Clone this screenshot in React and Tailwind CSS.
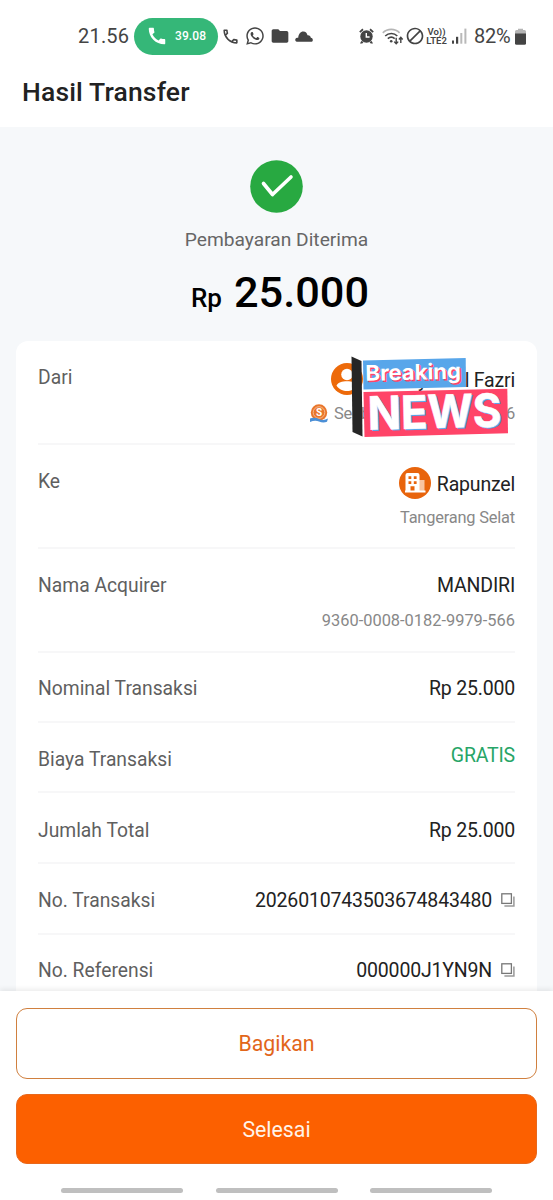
import { MdBlock, MdCall, MdFolder, MdOutlineCall } from 'react-icons/md';
import { FaWhatsapp } from 'react-icons/fa';

// ── Status bar icons ──────────────────────────────────────────────────────────
function CloudIcon() {
    return (
        <svg className="ml-[5px] w-[18px] h-[11px]" viewBox="0 0 18 11" fill="currentColor">
            <path d="M2 10.7C.5 10.4 0 9.300 .3 8.200C.8 7 2 6.700 3.200 6.800C3.500 3 5.500 .5 8.300 .5C10.700 .5 12 2 12.500 4.200C14.500 4 15.600 5 15.800 6.800C17.200 7 17.900 8 17.800 9.200C17.700 10.200 17 10.700 16 10.700Z" />
        </svg>
    );
}

function AlarmIcon() {
    return (
        <svg className="w-[15px] h-[16px]" viewBox="0 0 15 16" fill="currentColor">
            <path d="M.2 3.500 3.400.6 4.600 2 1.400 4.800ZM14.800 3.500 11.600.6 10.400 2 13.600 4.800Z" />
            <path d="M2.300 13 1 15.400H3.300L4.500 14ZM12.700 13 14 15.400H11.700L10.500 14Z" />
            <circle cx="7.500" cy="8.500" r="6.200" />
            <path d="M7.300 4.900V9H10.600" fill="none" stroke="#fff" strokeWidth="1.400" />
        </svg>
    );
}

function WifiIcon() {
    return (
        <svg className="ml-[8px] w-[22px] h-[17px]" viewBox="0 0 22 17" fill="none" stroke="currentColor" strokeWidth="1.600">
            <path d="M.8 4.900C5.500.2 13 .2 17.600 4.900" stroke="#b5b5b5" />
            <path d="M3.200 8C6.700 4.600 12 4.600 15.300 8" />
            <path d="M5.800 10.700C7.900 8.900 10.700 8.900 12.700 10.700" />
            <circle cx="9.200" cy="13.200" r="1.300" fill="currentColor" stroke="none" />
            <path d="M14.200 9.800V15.600M12.200 13.600 14.200 15.800 16.200 13.600M18.800 15V9.400M16.900 11.500 18.800 9.300 20.700 11.500" strokeWidth="1.400" />
        </svg>
    );
}

function SignalIcon() {
    return (
        <svg className="ml-[5px] w-[15px] h-[16px]" viewBox="0 0 15 16">
            <rect x="0" y="12.500" width="2" height="3.200" fill="#444" />
            <rect x="4" y="8.800" width="2.200" height="6.900" fill="#444" />
            <rect x="8.300" y="5" width="2" height="10.700" fill="#b9b9b9" />
            <rect x="12.400" y=".6" width="2" height="15.100" fill="#b9b9b9" />
        </svg>
    );
}

function BatteryIcon() {
    return (
        <svg className="ml-[3px] w-[11px] h-[17px]" viewBox="0 0 11 17">
            <path d="M3 2V.8H8V2H9.500Q11 2 11 3.500V6H0V3.500Q0 2 1.500 2Z" fill="#b5b5b5" />
            <path d="M0 5.500H11V15.200Q11 16.700 9.500 16.700H1.500Q0 16.700 0 15.200Z" fill="#444" />
        </svg>
    );
}

function StatusBar() {
    return (
        <div className="h-[72px] flex items-center pl-[78px] text-[#444]">
            <span className="w-[56px] text-[20px] tracking-[0.2px]">21.56</span>
            <div className="w-[84px] h-[37px] rounded-full bg-[#35b778] text-white flex items-center pl-[12px]">
                <MdCall className="w-[22px] h-[22px]" />
                <span className="ml-[7px] text-[12px] font-medium tracking-[0.1px]">39.08</span>
            </div>
            <MdOutlineCall className="ml-[3px] w-[19px] h-[19px]" />
            <FaWhatsapp className="ml-[5px] w-[20px] h-[20px]" />
            <MdFolder className="ml-[5px] w-[20px] h-[20px]" />
            <CloudIcon />
            <div className="ml-auto mr-[27px] flex items-center">
                <AlarmIcon />
                <WifiIcon />
                <MdBlock className="ml-[1px] w-[20px] h-[20px]" />
                <div className="ml-[1px] w-[21px] flex flex-col items-center text-[9.5px] leading-[9px] font-semibold">
                    <span>Vo))</span>
                    <span>LTE2</span>
                </div>
                <SignalIcon />
                <span className="ml-[7px] w-[38px] text-[20px] whitespace-nowrap tracking-[-0.3px]">82%</span>
                <BatteryIcon />
            </div>
        </div>
    );
}

// ── Card icons ────────────────────────────────────────────────────────────────
function CopyIcon() {
    return (
        <svg className="ml-[9px] w-[14px] h-[14px] -translate-y-px" viewBox="0 0 14 14" fill="none">
            <rect x=".8" y=".8" width="9.600" height="9.600" stroke="#777" strokeWidth="1.300" />
            <path d="M12.900 3.400V12.900H3.400" stroke="#999" strokeWidth="1.500" />
        </svg>
    );
}

function PersonAvatar() {
    return (
        <svg className="w-[32px] h-[32px]" viewBox="0 0 32 32">
            <circle cx="16" cy="16" r="16" fill="#ed6a0a" />
            <circle cx="16" cy="11.500" r="5.800" fill="#fff" />
            <path d="M5.500 22.500C7 19.500 11 18.300 16 18.300S25 19.500 26.500 22.500C24 26.500 20 28 16 28S8 26.500 5.500 22.500Z" fill="#fff" />
        </svg>
    );
}

function BuildingAvatar() {
    return (
        <svg className="w-[32px] h-[32px]" viewBox="0 0 32 32">
            <circle cx="16" cy="16" r="16" fill="#e8640c" />
            <path d="M20 13H25.500V24H20Z" fill="#f8c4a0" />
            <path d="M6.500 8Q6.500 6 8.500 6H18.500Q20.500 6 20.500 8V23.500H26.500V25.500H6V23.500H6.500Z" fill="#fff" />
            <path d="M9.500 9.300H12.300V12.100H9.500ZM14.800 9.300H17.600V12.100H14.800ZM9.500 14.300H12.300V17.100H9.500ZM14.800 14.300H17.600V17.100H14.800ZM11.500 19.300H15.500V23.500H11.500Z" fill="#e8640c" />
        </svg>
    );
}

function MedalIcon() {
    return (
        <svg className="w-[18px] h-[19px] -translate-y-px" viewBox="0 0 18 19">
            <circle cx="9" cy="8.500" r="8.200" fill="#e9762b" />
            <circle cx="9" cy="8.500" r="5.800" fill="none" stroke="#f7b98c" strokeWidth="1" />
            <text x="9" y="12" textAnchor="middle" fontSize="10" fontWeight="700" fill="#fff">S</text>
            <path d="M0 14.500Q4.500 12.800 9 15T18 14.500L17 17.800Q13 19.300 9 17.500T0 18Z" fill="#4b8fd6" />
        </svg>
    );
}

// "Breaking NEWS" sticker laid over the sender details
function NewsSticker() {
    return (
        <svg
            className="absolute left-[334px] top-[13px] w-[160px] h-[86px] overflow-visible"
            viewBox="350 354 160 86"
            fontFamily="Inter, sans-serif"
            fontWeight="700"
        >
            <path d="M351.500 356.500 361.500 361 362.500 436.500 352.500 432Z" fill="#262626" />
            <path d="M363 360.500 465.700 358 466 387 363.500 389.500Z" fill="#58a6ea" />
            <path d="M363.500 392 507.300 388.700 508 433.300 364.500 437Z" fill="#ff4468" />
            <g transform="rotate(-1.400 367 380)" fontSize="21.500">
                <text x="367" y="382.300" textLength="95.500" lengthAdjust="spacingAndGlyphs" fill="#ff4468">Breaking</text>
                <text x="365.500" y="380.800" textLength="95.500" lengthAdjust="spacingAndGlyphs" fill="#fff">Breaking</text>
            </g>
            <g transform="rotate(-1.400 369 430)" fontSize="46">
                <text x="369.500" y="431" textLength="133.500" lengthAdjust="spacingAndGlyphs" fill="#58a6ea">NEWS</text>
                <text x="368" y="429.700" textLength="133.500" lengthAdjust="spacingAndGlyphs" fill="#fff" stroke="#fff" strokeWidth=".5">NEWS</text>
            </g>
        </svg>
    );
}

// ── Detail row ────────────────────────────────────────────────────────────────
function Row({ label, className = 'h-[70px] pt-[25px]', children }) {
    return (
        <div className={`flex justify-between border-b-2 border-[#f7f7f8] leading-[24px] ${className}`}>
            <span className="text-[19.3px] tracking-normal text-[#5f5f5f]">{label}</span>
            <div className="flex flex-col items-end text-[#222]">{children}</div>
        </div>
    );
}

export default function App() {
    return (
        <div className="w-[553px] h-[1200px] overflow-hidden flex flex-col bg-white font-['Roboto',sans-serif]">
            <StatusBar />
            <header className="h-[55px] px-[22px] pt-[2px] text-[26.5px] leading-[36px] tracking-[0.15px] font-medium text-[#222]">
                Hasil Transfer
            </header>

            <main className="h-[864px] overflow-hidden bg-[#f6f8fa] px-4 flex flex-col">
                {/* Result summary */}
                <div className="h-[214px] shrink-0 flex flex-col items-center pt-[33px]">
                    <svg className="w-[53px] h-[53px]" viewBox="0 0 53 53" fill="none">
                        <circle cx="26.500" cy="26.500" r="26.300" fill="#28a941" />
                        <path d="M13.500 23.500 22.500 34.500 41 17" stroke="#fff" strokeWidth="3.600" strokeLinecap="round" strokeLinejoin="round" />
                    </svg>
                    <p className="mt-[14px] text-[19.2px] leading-[26px] text-[#666]">Pembayaran Diterima</p>
                    <p className="mt-[14px] ml-[7px] flex items-baseline gap-[12px] leading-[52px] font-medium text-black">
                        <span className="text-[26px]">Rp</span>
                        <span className="text-[43.3px]">25.000</span>
                    </p>
                </div>

                {/* Transaction details */}
                <section className="relative shrink-0 rounded-xl bg-white px-[22px] text-[19.5px] tracking-[-0.19px]">
                    <Row label="Dari" className="h-[104px] pt-[25px]">
                        <div className="-mt-[3px] h-[32px] flex items-center gap-[6px]">
                            <PersonAvatar />
                            <span className="w-[58px] pt-[4px] text-right">y</span>
                            <span className="w-[82px] pt-[4px] text-right">l Fazri</span>
                        </div>
                        <div className="mt-[7px] w-[205px] flex items-center text-[16.500px] text-[#888]">
                            <MedalIcon />
                            <span className="ml-[6px]">Seab</span>
                            <span className="ml-auto">6</span>
                        </div>
                    </Row>
                    <Row label="Ke" className="h-[104px] pt-[25px]">
                        <div className="-mt-[2px] h-[32px] flex items-center gap-[6px] -translate-y-px">
                            <BuildingAvatar />
                            <span className="pt-[4px]">Rapunzel</span>
                        </div>
                        <span className="mt-[6px] text-[16.400px] text-[#888]">Tangerang Selat</span>
                    </Row>
                    <Row label="Nama Acquirer" className="h-[104px] pt-[25px]">
                        <span>MANDIRI</span>
                        <span className="mt-[11px] text-[16.400px] tracking-normal text-[#888]">9360-0008-0182-9979-566</span>
                    </Row>
                    <Row label="Nominal Transaksi" className="h-[70px] pt-[24px]">Rp 25.000</Row>
                    <Row label="Biaya Transaksi">
                        <span className="-mt-[4px] text-[#27a567]">GRATIS</span>
                    </Row>
                    <Row label="Jumlah Total" className="h-[71px] pt-[26px]">Rp 25.000</Row>
                    <Row label="No. Transaksi" className="h-[71px] pt-[25px]">
                        <span className="flex items-center">2026010743503674843480<CopyIcon /></span>
                    </Row>
                    <Row label="No. Referensi" className="h-[70px] pt-[24px]">
                        <span className="flex items-center">000000J1YN9N<CopyIcon /></span>
                    </Row>
                    <NewsSticker />
                </section>
            </main>

            {/* Bottom actions */}
            <footer className="relative grow bg-white px-4 pt-[17px] text-[21.3px] shadow-[0_-2px_5px_rgba(0,0,0,0.08)]">
                <button className="w-full h-[71px] block rounded-[11px] border-[1.500px] border-[#d0803f] text-[#e2661a]">Bagikan</button>
                <button className="mt-[15px] w-full h-[70px] block rounded-[11px] border border-[#e8681c] bg-[#fc6000] pt-[2px] text-[#fff3e8]">Selesai</button>
                <div className="mt-[24px] ml-[45px] flex gap-[32.5px]">
                    <div className="w-[122px] h-[5px] rounded-full bg-[#bfbfbf]" />
                    <div className="w-[122px] h-[5px] rounded-full bg-[#bfbfbf]" />
                    <div className="w-[122px] h-[5px] rounded-full bg-[#bfbfbf]" />
                </div>
            </footer>
        </div>
    );
}
